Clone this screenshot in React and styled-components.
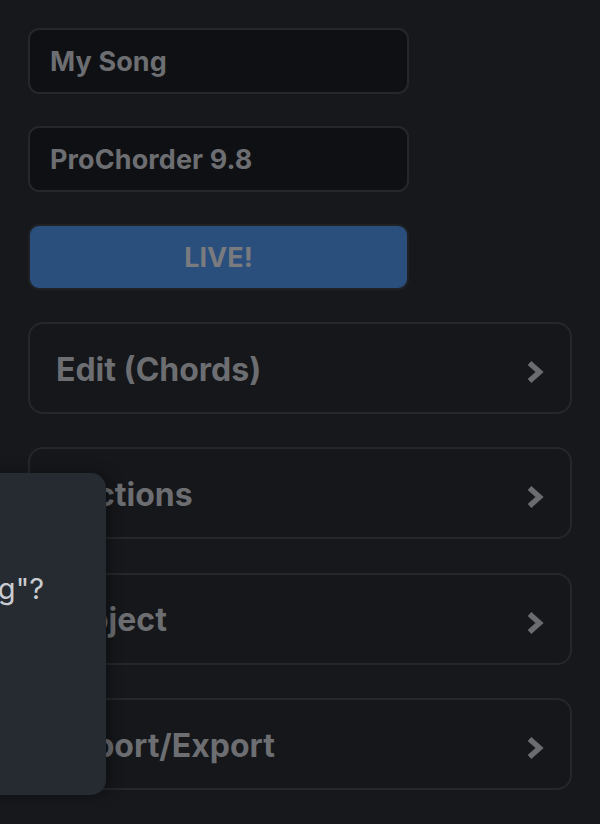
import React from "react";
import styled, { createGlobalStyle } from "styled-components";

const Global = createGlobalStyle`
  html, body {
    margin: 0;
    padding: 0;
    background: #16181c;
    font-family: Inter, "Noto Sans", sans-serif;
  }
  #root {
    min-height: 824px;
  }
`;

const Page = styled.div`
  position: relative;
  height: 824px;
  overflow: hidden;
  background: #16181c;
  padding: 28px 28px 0 28px;
  box-sizing: border-box;
  display: flex;
  flex-direction: column;
`;

const Fields = styled.div`
  width: 381px;
  display: flex;
  flex-direction: column;
  gap: 32px;
`;

const Field = styled.input`
  box-sizing: border-box;
  height: 66px;
  width: 100%;
  padding: 0 20px;
  border: 2px solid #25272b;
  border-radius: 11px;
  background: #0f1013;
  color: #6c6e72;
  font-family: Inter, sans-serif;
  font-size: 27px;
  font-weight: 700;
  letter-spacing: 0.1px;
  outline: none;
`;

const LiveButton = styled.button`
  box-sizing: border-box;
  height: 66px;
  width: 100%;
  border: 2px solid #1f2125;
  border-radius: 11px;
  background: #2a4f7d;
  color: #7a7b7e;
  font-family: Inter, sans-serif;
  font-size: 27px;
  font-weight: 700;
  cursor: pointer;
`;

const Menu = styled.div`
  margin-top: 32px;
  display: flex;
  flex-direction: column;
  gap: 33.4px;
  width: 544px;
`;

const Card = styled.div`
  box-sizing: border-box;
  height: 92px;
  display: flex;
  align-items: center;
  justify-content: space-between;
  padding: 2px 26px 0 26px;
  border: 2px solid #25272b;
  border-radius: 15px;
  background: #15171a;
  color: #6c6e72;
  font-size: 32px;
  font-weight: 700;
`;

const Chevron = () => (
  <svg width="18" height="24" viewBox="0 0 18 24" style={{ marginTop: 6 }}>
    <path d="M3.5 3 L13.5 12 L3.5 21" fill="none" stroke="#6a6c70" strokeWidth="5.5" strokeLinejoin="miter" />
  </svg>
);

const Dialog = styled.div`
  position: absolute;
  top: 473px;
  left: -300px;
  width: 406px;
  height: 322px;
  box-sizing: border-box;
  border-radius: 15px;
  background: #262a31;
  box-shadow: 4px 0 14px rgba(0, 0, 0, 0.35);
  padding: 98px 62px 0 0;
  text-align: right;
`;

const Question = styled.div`
  color: #c9ccd1;
  font-size: 29px;
  font-weight: 400;
  white-space: nowrap;
`;

const items = ["Edit (Chords)", "Sections", "Project", "Import/Export"];

export default function App() {
  return (
    <>
      <Global />
      <Page>
        <Fields>
          <Field defaultValue="My Song" />
          <Field defaultValue="ProChorder 9.8" />
          <LiveButton>LIVE!</LiveButton>
        </Fields>
        <Menu>
          {items.map((t) => (
            <Card key={t}>
              <span>{t}</span>
              <Chevron />
            </Card>
          ))}
        </Menu>
        <Dialog>
          <Question>Delete "My Song"?</Question>
        </Dialog>
      </Page>
    </>
  );
}
